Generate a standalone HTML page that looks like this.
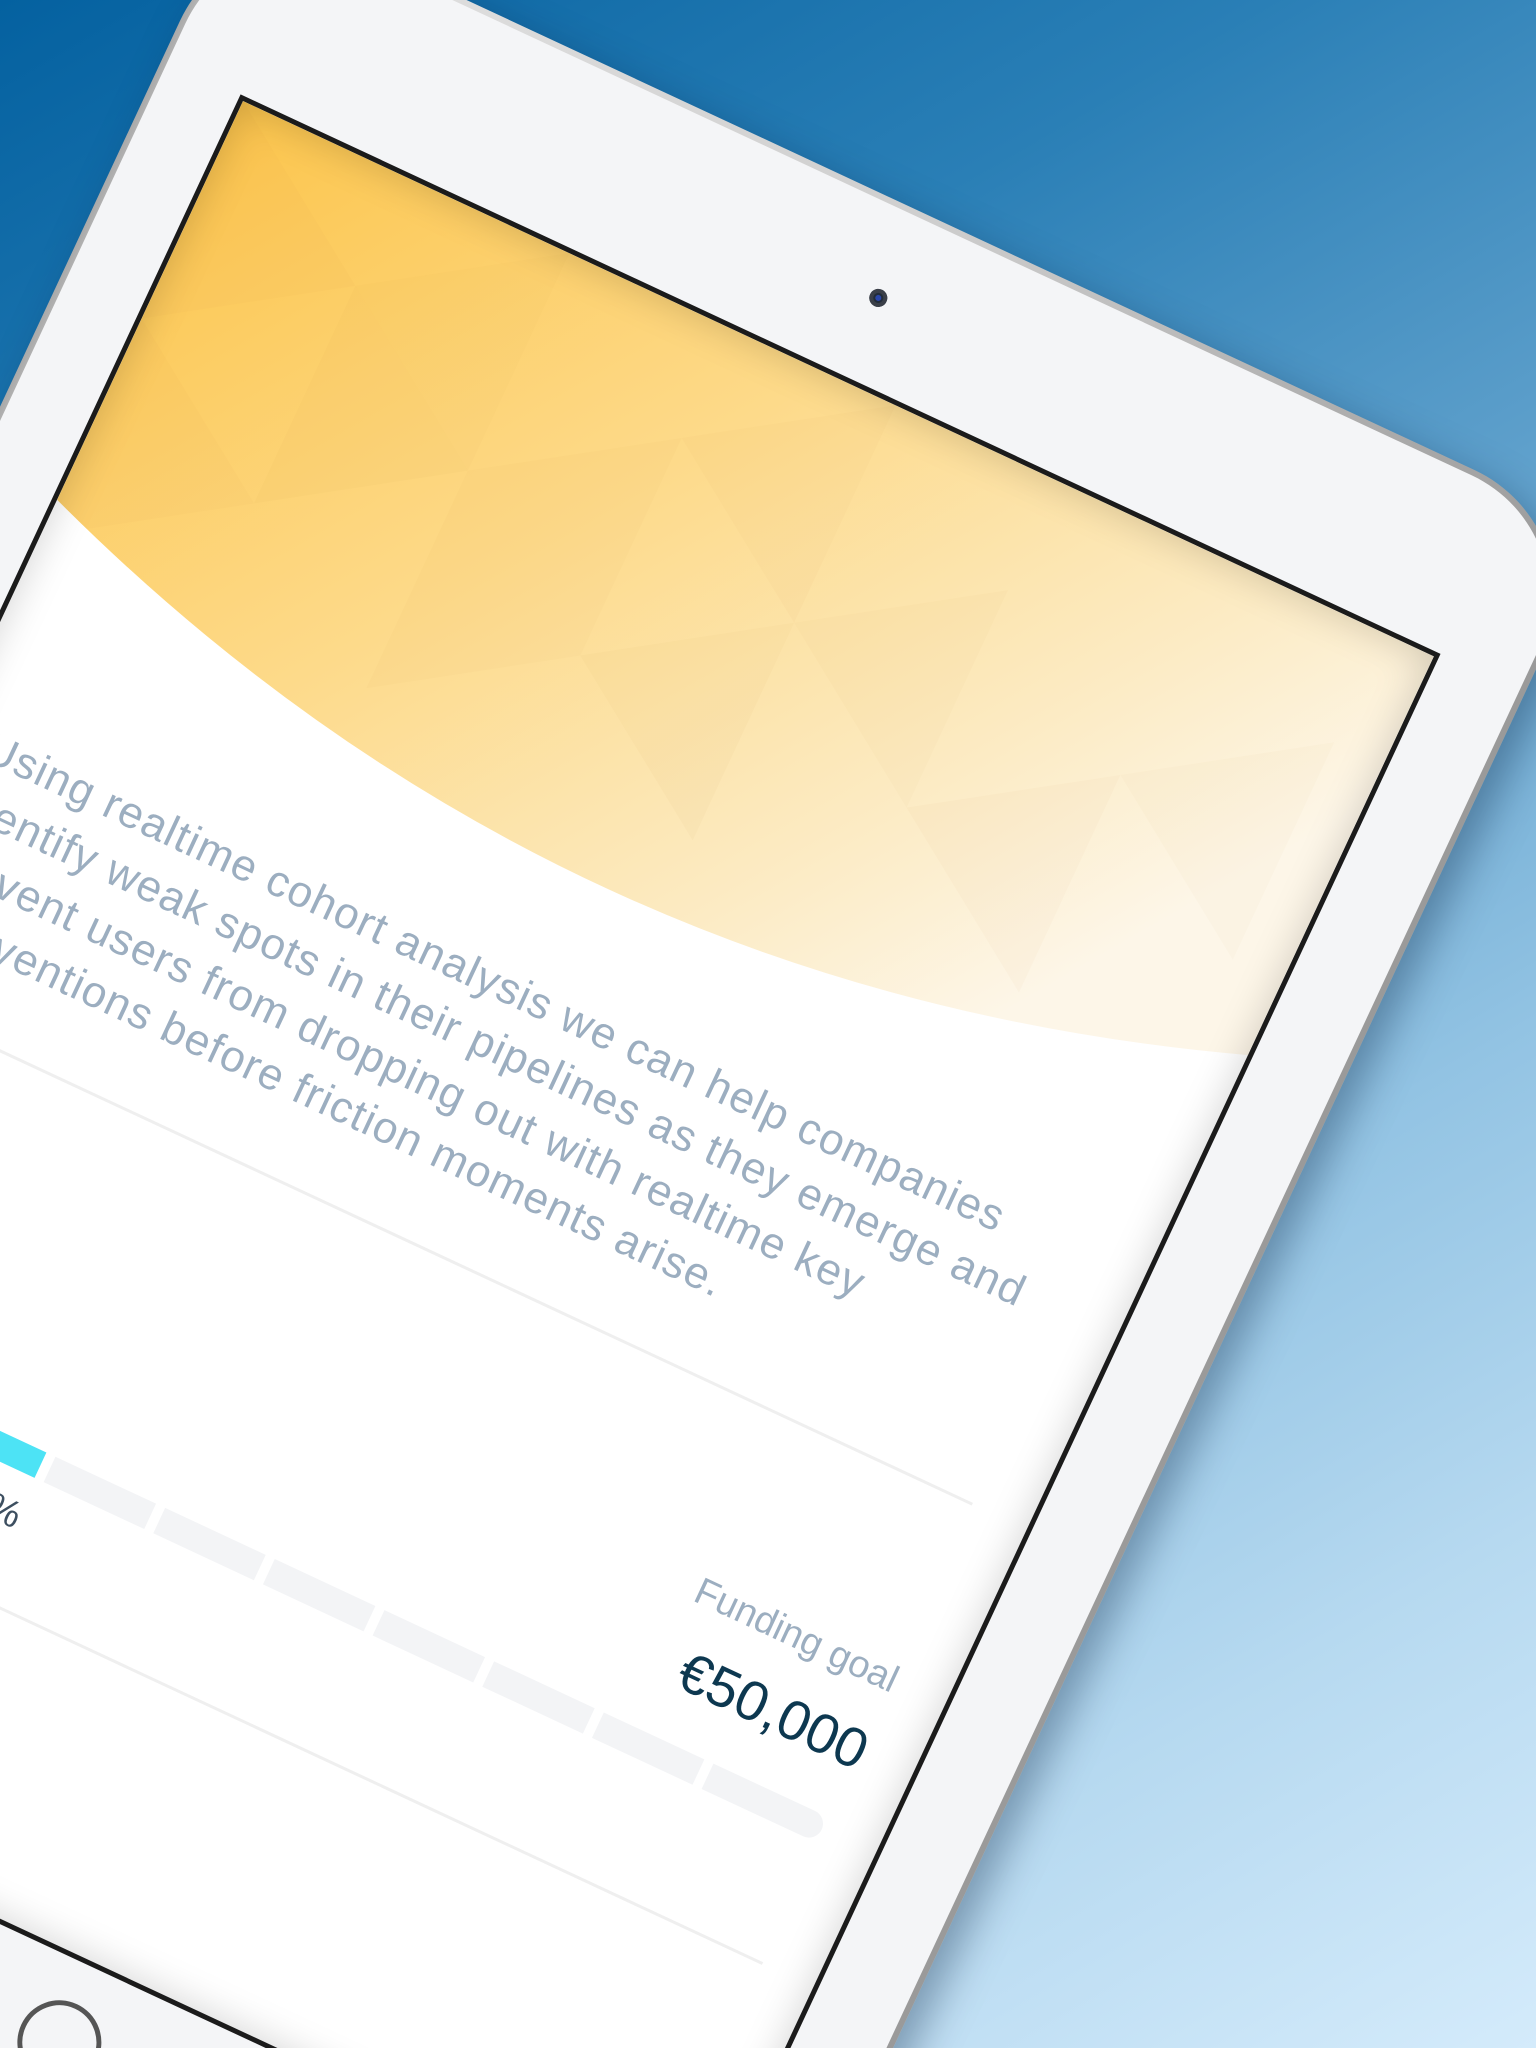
<!DOCTYPE html>
<html><head><meta charset="utf-8">
<style>
html{margin:0;padding:0;width:1536px;height:2048px;overflow:hidden;}
body{margin:0;padding:0;width:1536px;height:2048px;overflow:hidden;position:relative;
background:linear-gradient(150deg,#0461a0 0%,#2a7fb6 25%,#5d9fcb 45%,#92c3e3 65%,#b6d9f0 82%,#d4ebfb 100%);
font-family:"Liberation Sans",sans-serif;}
#wrap{position:absolute;left:0;top:0;width:1536px;height:2048px;overflow:hidden;}
#dev{position:absolute;left:243px;top:101px;width:0;height:0;transform:rotate(25deg);transform-origin:0 0;}
#body{position:absolute;left:-91px;top:-186px;width:1503px;height:2122px;border-radius:140px;
background:linear-gradient(90deg,#a9a9a9,#e2e2e2 3%,#cfcfcf 50%,#9a9a9a 100%);
box-shadow:18px 10px 40px rgba(0,30,60,0.35);}
#bezel{position:absolute;left:-85px;top:-180px;width:1491px;height:2110px;border-radius:134px;background:#f4f5f7;}
#cam{position:absolute;left:650px;top:-99px;width:18px;height:18px;border-radius:50%;background:#222c3a;box-shadow:inset 0 0 0 4px #3a3f48;}
#cam:after{content:"";position:absolute;left:6px;top:6px;width:6px;height:6px;border-radius:50%;background:#2a46a8;}
#home{position:absolute;left:612px;top:1795px;width:84px;height:84px;border-radius:50%;border:5px solid #555;box-sizing:border-box;}
#screen{position:absolute;left:0;top:0;width:1314px;height:1750px;background:#fff;overflow:hidden;outline:5px solid #1b1b1b;}
#shade{position:absolute;left:0;top:0;width:1314px;height:1750px;box-shadow:inset 0 0 40px rgba(0,0,0,0.18);}
.ln{position:absolute;left:40px;white-space:nowrap;font-size:44px;color:#9caec0;letter-spacing:1.2px;}
.hr{position:absolute;height:3px;background:#efefef;}
.seg{position:absolute;top:1308px;height:28px;width:111px;background:#f3f4f6;}
</style></head><body>
<div id="wrap">
<div id="dev">
 <div id="body"></div>
 <div id="bezel"></div>
 <div id="cam"></div>
 <div id="home"></div>
 <div id="screen">
  <svg width="1314" height="1750" style="position:absolute;left:0;top:0">
   <defs>
    <linearGradient id="yg" x1="0" y1="0" x2="1" y2="0.3">
     <stop offset="0" stop-color="#fcc54c"/>
     <stop offset="0.45" stop-color="#fdda8a"/>
     <stop offset="0.8" stop-color="#fcebc4"/>
     <stop offset="1" stop-color="#fdf6e8"/>
    </linearGradient>
    <clipPath id="cp"><path d="M0,0 H1314 V440 Q657,680 0,440 Z"/></clipPath>
   </defs>
   <path d="M0,0 H1314 V440 Q657,680 0,440 Z" fill="url(#yg)"/>
   <g clip-path="url(#cp)" fill="#b08030">
    <polygon points="0,0 180,120 0,240" opacity="0.03"/>
    <polygon points="180,120 360,0 360,240" opacity="0.025"/>
    <polygon points="180,120 360,240 180,360" opacity="0.035"/>
    <polygon points="360,240 540,120 540,360" opacity="0.025"/>
    <polygon points="540,120 720,0 720,240" opacity="0.03"/>
    <polygon points="540,360 720,240 720,480" opacity="0.035"/>
    <polygon points="720,240 900,120 900,360" opacity="0.025"/>
    <polygon points="900,360 1080,240 1080,480" opacity="0.03"/>
    <polygon points="1080,240 1260,120 1260,360" opacity="0.025"/>
    <polygon points="0,240 180,360 0,480" opacity="0.03"/>
    <polygon points="360,240 540,360 360,480" opacity="0.025"/>
   </g>
  </svg>
  <div class="ln" style="top:668px">Using realtime cohort analysis we can help companies</div>
  <div class="ln" style="top:727px">identify weak spots in their pipelines as they emerge and</div>
  <div class="ln" style="top:787px">prevent users from dropping out with realtime key</div>
  <div class="ln" style="top:846px">interventions before friction moments arise.</div>
  <div class="hr" style="left:0;width:1254px;top:962px"></div>
  <div style="position:absolute;right:54px;top:1136px;font-size:38px;color:#9caec0;">Funding goal</div>
  <div style="position:absolute;right:52px;top:1202px;font-size:56px;color:#0d3850;">€50,000</div>
  <div class="seg" style="left:40px;background:#4de3f5"></div>
  <div class="seg" style="left:161px;background:#4de3f5"></div>
  <div class="seg" style="left:282px;background:#4de3f5"></div>
  <div class="seg" style="left:403px"></div>
  <div class="seg" style="left:524px"></div>
  <div class="seg" style="left:645px"></div>
  <div class="seg" style="left:766px"></div>
  <div class="seg" style="left:887px"></div>
  <div class="seg" style="left:1008px"></div>
  <div class="seg" style="left:1129px;width:126px;border-radius:0 14px 14px 0"></div>
  <div style="position:absolute;left:320px;top:1358px;font-size:38px;color:#3d4f60;">30%</div>
  <div class="hr" style="left:0;width:1258px;top:1467px"></div>
  <div id="shade"></div>
 </div>
</div>
</div>
</body></html>
